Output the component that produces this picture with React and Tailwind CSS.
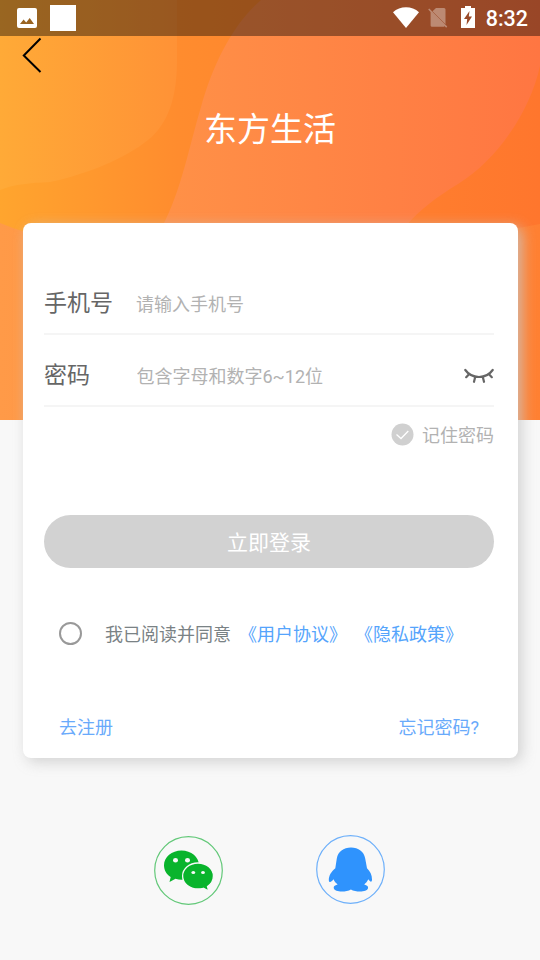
import { useState } from 'react';

function HeaderBackdrop() {
    return (
        <svg className="absolute inset-x-0 top-0 h-[420px] w-full" viewBox="0 0 540 420" preserveAspectRatio="none" aria-hidden="true">
            <defs>
                <linearGradient id="base" x1="0" y1="0" x2="1" y2="0">
                    <stop offset="0" stopColor="#ffa52e" />
                    <stop offset="0.33" stopColor="#ff8c2e" />
                    <stop offset="0.8" stopColor="#ff7d2e" />
                    <stop offset="1" stopColor="#ff762d" />
                </linearGradient>
                <linearGradient id="leftBlob" x1="0" y1="0" x2="1" y2="0">
                    <stop offset="0" stopColor="#ffaa37" />
                    <stop offset="1" stopColor="#ff9236" />
                </linearGradient>
                <linearGradient id="rightBlob" x1="0" y1="0" x2="1" y2="0">
                    <stop offset="0" stopColor="#ff9147" />
                    <stop offset="1" stopColor="#ff7642" />
                </linearGradient>
                <linearGradient id="lower" x1="0" y1="0" x2="1" y2="0">
                    <stop offset="0" stopColor="#ff9a48" />
                    <stop offset="1" stopColor="#ff8032" />
                </linearGradient>
            </defs>
            <rect width="540" height="420" fill="url(#base)" />
            <path d="M0 0H177V60C177 98 168 124 148 140C126 158 88 174 50 182C30 183 15 184 0 190Z" fill="url(#leftBlob)" />
            <path d="M261 0H540V66C531 108 500 158 458 184C437 197 420 209 405 227H162C181 192 190 143 201 107C213 64 233 24 261 0Z" fill="url(#rightBlob)" />
            <path d="M0 223C50 244 160 265 270 264C380 263 460 238 540 224V420H0Z" fill="url(#lower)" />
        </svg>
    );
}

function StatusBar() {
    return (
        <div className="flex h-9 items-center bg-black/40 pl-[17px] pr-3 text-white">
            <svg className="h-5 w-5" viewBox="0 0 20 20">
                <path fillRule="evenodd" d="M2 0h16a2 2 0 0 1 2 2v16a2 2 0 0 1-2 2H2a2 2 0 0 1-2-2V2a2 2 0 0 1 2-2ZM3 16h14l-4.3-6-3.5 4.4-2.6-3Z" fill="currentColor" />
            </svg>
            <div className="ml-[13px] h-[26px] w-[26px] bg-white" />
            <div className="ml-auto flex items-center pb-0.5">
                <svg className="h-[21px] w-[26px]" viewBox="0 0 26 21">
                    <path d="M0 5.2C7-1.3 19-1.3 26 5.2L13 21Z" fill="currentColor" />
                </svg>
                <svg className="ml-[9px] h-[22px] w-5 opacity-35" viewBox="0 0 20 22">
                    <path d="M8 2h8a1.5 1.5 0 0 1 1.5 1.5v14.8L4.5 5.200ZM2.600 5.200 17 19.600l-1 1.200H4a1.500 1.500 0 0 1-1.400-1.400Z" fill="currentColor" />
                    <path d="m.7 3 18 18.100" stroke="currentColor" strokeWidth="1.500" />
                </svg>
                <svg className="ml-[13px] h-[22px] w-[14px]" viewBox="0 0 14 22">
                    <path fillRule="evenodd" d="M4 0h6v2h4v20H0V2h4ZM8.5 5 3 13h3.2l-.7 6L11 10.5H7.8Z" fill="currentColor" />
                </svg>
            </div>
            <span className="ml-[11px] pt-0.5 text-[21.5px] font-medium leading-[34px]">8:32</span>
        </div>
    );
}

function EyeClosed() {
    return (
        <svg className="mb-px h-4 w-[30px]" viewBox="0 0 30 16" fill="none" stroke="#666" strokeWidth="2.2" strokeLinecap="round">
            <path d="M1.3 2C8 11.3 22 11.3 28.7 2M5 6.2 2.2 9.2M11.2 9 10 13.8M18.8 9 20 13.8M25 6.2 27.8 9.2" />
        </svg>
    );
}

function WechatIcon() {
    return (
        <svg className="mt-px h-[70px] w-[70px]" viewBox="0 0 70 70">
            <circle cx="34.5" cy="34.5" r="33.8" fill="none" stroke="#62c878" strokeWidth="1.2" />
            <path d="M27.5 14.5c-9.7 0-17.5 6.5-17.5 14.8 0 5 2.5 9 6.7 11.7L15.5 46l6-3.2c2 .6 4 .9 6 .9 9.7 0 17.5-6.3 17.5-14.5s-7.8-14.7-17.5-14.700Z" fill="#09b42c" />
            <path d="M44 27c-8.600 0-15.400 5.700-15.400 13s6.800 13 15.400 13c2 0 3.700-.2 5.400-.7L54.700 55l-1.200-4.500c3.600-2.400 5.900-6.100 5.900-10.500 0-7.300-6.800-13-15.400-13Z" fill="#09b42c" stroke="#f8f8f8" strokeWidth="1.3" />
            <g fill="#f8f8f8">
                <ellipse cx="21.5" cy="24.2" rx="2.5" ry="2.2" />
                <ellipse cx="33.5" cy="24.2" rx="2.5" ry="2.2" />
                <ellipse cx="39.3" cy="36.5" rx="1.9" ry="1.6" />
                <ellipse cx="49" cy="36.5" rx="1.9" ry="1.6" />
            </g>
        </svg>
    );
}

function QQIcon() {
    return (
        <svg className="h-[70px] w-[70px]" viewBox="0 0 70 70">
            <circle cx="34.5" cy="34.5" r="33.8" fill="none" stroke="#6eb0fa" strokeWidth="1.2" />
            <path d="M35 12.5C27.500 12.500 22 16.500 20.800 23.500L19.300 33.300C15.500 36.500 12.800 40.500 12.800 45c0 2.600 2 3 4.700-.7.8 2.200 2.400 3.800 4.100 5.200-3 .7-4.300 2-3.800 3.700 1 4.100 12.200 4.100 17.100 1.200 5 2.900 16.100 2.900 17.100-1.200.5-1.700-.8-3-3.800-3.700 1.700-1.400 3.200-3 4-5.200 2.600 3.600 3.800 2.800 3.800.2 0-4.500-1.800-8-5-11.200L49.200 23.500C48 16.500 42.500 12.500 35 12.500Z" fill="#2f93fd" />
        </svg>
    );
}

export default function App() {
    const [phone, setPhone] = useState('');
    const [password, setPassword] = useState('');
    const [agreed, setAgreed] = useState(false);

    return (
        <div className="relative min-h-[960px] w-full overflow-hidden bg-[#f8f8f8] font-[Roboto,'Noto_Sans_CJK_SC',sans-serif]">
            <HeaderBackdrop />
            <div className="relative flex flex-col">
                <StatusBar />
                <button className="ml-[22px] mt-px w-5" aria-label="返回">
                    <svg className="h-9 w-5" viewBox="0 0 20 36" fill="none" stroke="#000" strokeWidth="2">
                        <path d="M18.5 1.5 1.8 18.5 18.5 35" />
                    </svg>
                </button>
                <h1 className="mt-[31px] h-[52px] text-center text-[33px] leading-[52px] text-white">东方生活</h1>

                <main className="ml-[23px] mr-[22.5px] mt-[66.5px] flex h-[535.5px] flex-col rounded-[8px] bg-white pl-[21px] pr-[23.5px] pt-[39.5px] shadow-[4px_4px_14px_rgba(200,200,200,0.8)]">
                    <label className="flex h-[73px] items-center border-b-2 border-[#f5f5f5] pt-[13px]">
                        <span className="w-[92px] text-[23px] text-[#666]">手机号</span>
                        <input
                            className="w-0 flex-1 pt-0.5 text-lg text-[#666] outline-none placeholder:text-[#b2b2b2]"
                            placeholder="请输入手机号"
                            value={phone}
                            onChange={(e) => setPhone(e.target.value)}
                        />
                    </label>
                    <div className="flex h-[72px] items-center border-b-2 border-[#f5f5f5] pt-[13px]">
                        <span className="w-[92px] text-[23px] text-[#666]">密码</span>
                        <input
                            type="password"
                            className="w-0 flex-1 pl-[0.5px] text-lg text-[#666] outline-none placeholder:text-[#b2b2b2]"
                            placeholder="包含字母和数字6~12位"
                            value={password}
                            onChange={(e) => setPassword(e.target.value)}
                        />
                        <EyeClosed />
                    </div>
                    <div className="mt-[13px] flex h-7 items-center justify-end gap-2 text-lg text-[#b2b2b2]">
                        <svg className="h-[23px] w-[23px]" viewBox="0 0 23 23">
                            <circle cx="11.5" cy="11.5" r="11" fill="#d0d0d0" />
                            <path d="m5.5 11.5 4.5 4 7.3-7.5" fill="none" stroke="#fff" strokeWidth="1.3" />
                        </svg>
                        <span className="pt-1">记住密码</span>
                    </div>
                    <button className="mt-[67px] h-[53px] rounded-full bg-[#d2d2d2] pt-1 text-[21px] text-white">立即登录</button>

                    <div className="mt-[51px] flex h-7 items-center pl-[15px] text-lg text-[#7a8285]">
                        <button
                            className="h-[23px] w-[23px] rounded-full border-2 border-[#999]"
                            aria-label="同意"
                            aria-pressed={agreed}
                            onClick={() => setAgreed(!agreed)}
                        />
                        <span className="ml-[23px] pt-1">我已阅读并同意</span>
                        <a className="ml-2 pt-1 text-[#55a4fc]">《用户协议》</a>
                        <a className="ml-2 pt-1 text-[#55a4fc]">《隐私政策》</a>
                    </div>
                    <div className="mt-[67px] flex h-7 items-center justify-between px-[15px] text-lg text-[#69aafb]">
                        <a>去注册</a>
                        <a>忘记密码?</a>
                    </div>
                </main>

                <div className="mt-[77px] flex items-start justify-center gap-[92px]">
                    <WechatIcon />
                    <QQIcon />
                </div>
            </div>
        </div>
    );
}
